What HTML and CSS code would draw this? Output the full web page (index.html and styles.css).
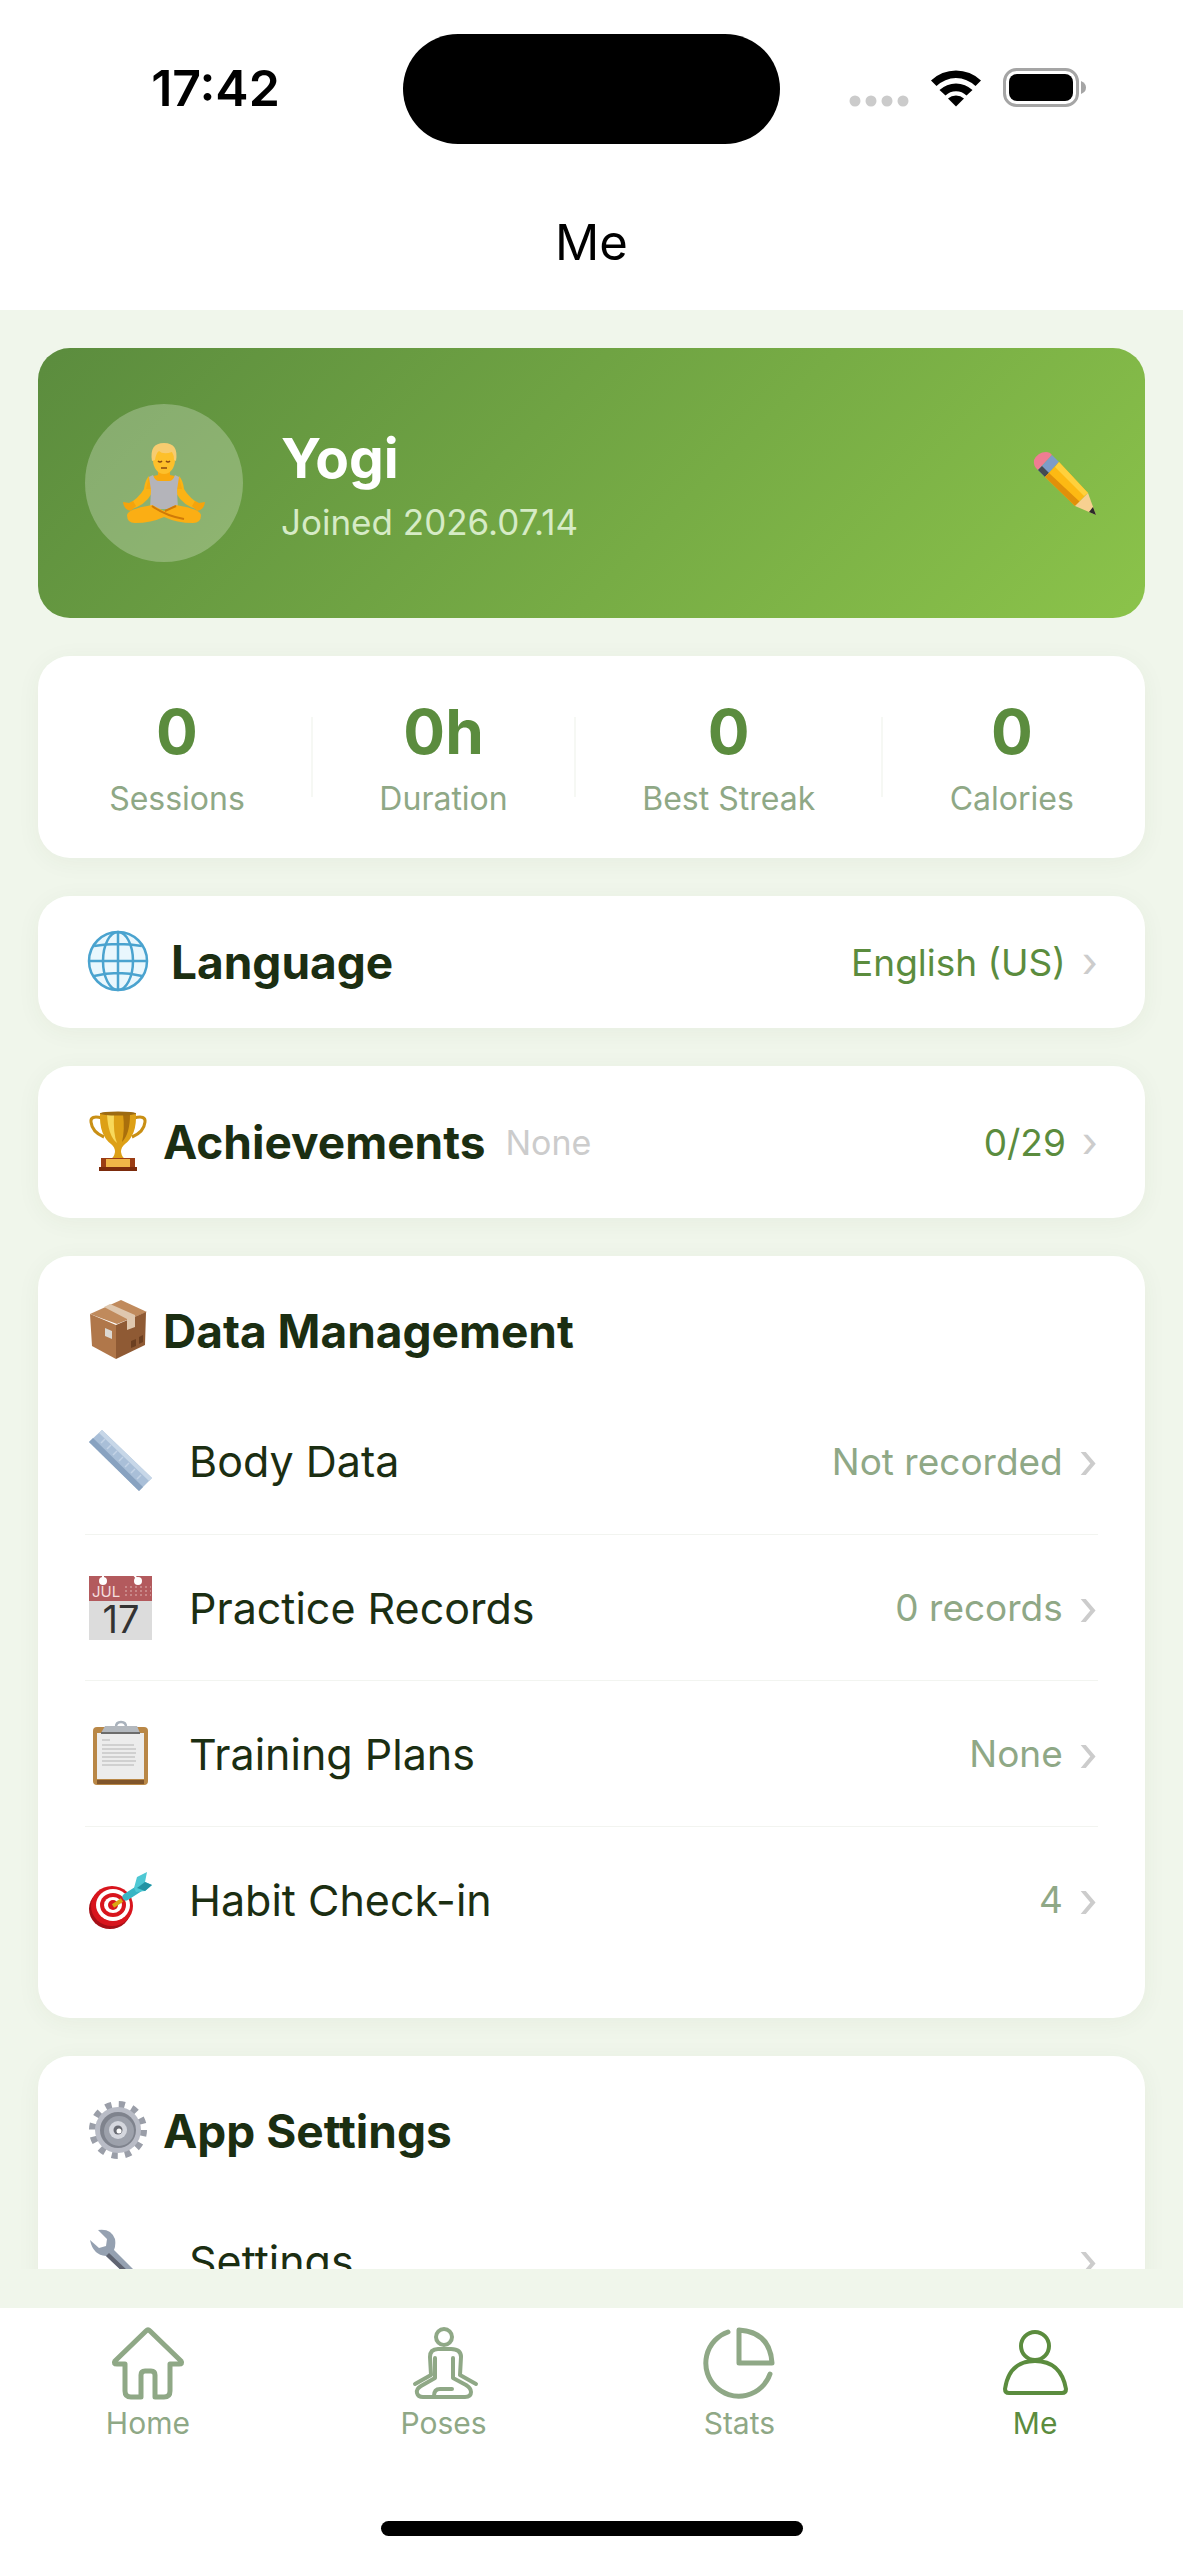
FILE: index.html
```html
<!DOCTYPE html>
<html lang="en">
  <head>
    <meta charset="UTF-8" />
    <meta name="viewport" content="width=device-width, initial-scale=1.0" />
    <title>Me</title>
    <link rel="stylesheet" href="styles.css" />
  </head>
  <body>
    <div class="status-bar">
      <div class="status-side">
        <span class="time">17:42</span>
      </div>
      <div class="island"></div>
      <div class="status-side status-icons">
        <svg class="signal" viewBox="0 0 60 40" fill="#cbcbcb">
          <circle cx="6" cy="33" r="5.500" />
          <circle cx="22" cy="33" r="5.500" />
          <circle cx="38" cy="33" r="5.500" />
          <circle cx="54" cy="33" r="5.500" />
        </svg>
        <svg class="wifi" viewBox="0 0 52 40">
          <path d="M1 12.500a36 36 0 0 1 50 0l-5.500 5.500a28 28 0 0 0-39 0z" />
          <path d="M9.500 22a24 24 0 0 1 33 0l-6 5.500a15 15 0 0 0-21 0z" />
          <path d="M18 30.500a12 12 0 0 1 16 0l-8 8z" />
        </svg>
        <svg class="battery" viewBox="0 0 84 40">
          <rect x="1.500" y="1.500" width="73" height="36" rx="12" fill="none" stroke="#a5a5a5" stroke-width="3" />
          <rect x="6" y="6" width="64" height="27" rx="8" />
          <path d="M78 13q5 2 5 6.500t-5 6.500z" fill="#a5a5a5" />
        </svg>
      </div>
    </div>

    <header class="nav-bar">
      <h1>Me</h1>
    </header>

    <main class="content">
      <section class="profile">
        <div class="avatar">
          <svg viewBox="0 0 84 80">
            <path d="M27 33q-4 4-5 13-5 9-17 16l2 5q16-4 23-17zM57 33q4 4 5 13 5 9 17 16l-2 5q-16-4-23-17z" fill="#fbb315" />
            <path d="M1 59l6 1 4-2 3 5-5 5q-7-1-8-9zM83 59l-6 1-4-2-3 5 5 5q7-1 8-9z" fill="#f5a30b" />
            <path d="M36 24h12v8l9 2 3 12H24l3-12 9-2z" fill="#f9a90e" />
            <path d="M31 32q2 6 6 6h10q4 0 6-6l4 2-2 13 1 19H28l1-19-2-13z" fill="#b4b4ba" />
            <path d="M30 62Q6 66 5 72q0 8 8 8 16 0 29-6 13 6 29 6 8 0 8-8-1-6-25-10l-12 6z" fill="#fbae14" />
            <path d="M30 63q14 10 32 13M54 63l-11 5" fill="none" stroke="#cf7a08" stroke-width="2" />
            <ellipse cx="42" cy="17" rx="11" ry="14" fill="#fdc02b" />
            <path d="M30 18Q27 0 42 0q15 0 12 18l-2-1q0-5-2-8-9 3-13-1-3 2-4 9z" fill="#f7cc70" />
            <path d="M36 18q2 2 4 0M44 18q2 2 4 0M39 25h6" fill="none" stroke="#8b4a12" stroke-width="1.500" />
          </svg>
        </div>
        <div class="profile-text">
          <h2>Yogi</h2>
          <p>Joined 2026.07.14</p>
        </div>
        <button class="edit" type="button" aria-label="Edit profile">
          <svg viewBox="0 0 66 66">
            <path d="M2 10Q6 2 14 2q4 0 6 3L6 20q-5-4-4-10z" fill="#ef7d92" />
            <path d="M6 20L20 5l7 7-14 15z" fill="#7d9cc9" />
            <path d="M6 20l4-4 7 7-4 4z" fill="#444a52" />
            <path d="M13 27L27 12l29 31-13 13z" fill="#fdb913" />
            <path d="M13 27l4-4 31 29-5 4z" fill="#e0900a" />
            <path d="M23 17l4-5 29 31-4 3z" fill="#ffd03c" />
            <path d="M43 56l13-13 8 22z" fill="#f7d090" />
            <path d="M57 62l4-5 3 8z" fill="#2b2b2b" />
          </svg>
        </button>
      </section>

      <section class="card stats">
        <div class="stat"><strong>0</strong><span>Sessions</span></div>
        <i class="divider"></i>
        <div class="stat"><strong>0h</strong><span>Duration</span></div>
        <i class="divider"></i>
        <div class="stat"><strong>0</strong><span>Best Streak</span></div>
        <i class="divider"></i>
        <div class="stat"><strong>0</strong><span>Calories</span></div>
      </section>

      <a class="card link-card language" href="#language">
        <svg class="icon" viewBox="0 0 66 66" fill="none" stroke="#4aa3cf" stroke-width="2.500">
          <circle cx="33" cy="32" r="29" fill="#e9f7fd" />
          <ellipse cx="33" cy="32" rx="15" ry="29" />
          <path d="M33 3v58M9 17q24-4 48 0M4 32h58M9 47q24-6 48 0" />
        </svg>
        <h2>Language</h2>
        <span class="link-value">English (US)</span>
        <span class="arrow">›</span>
      </a>

      <a class="card link-card" href="#achievements">
        <svg class="icon" viewBox="0 0 66 66">
          <path d="M17 9Q5 6 6 13q1 10 13 15M49 9q12-3 11 4-1 10-13 15" fill="none" stroke="#c98f14" stroke-width="3" />
          <path d="M15 4h36q1 22-11 31-4 3-4 8 1 6 5 7H25q4-1 5-7 0-5-4-8Q14 26 15 4z" fill="#dda016" />
          <path d="M22 5h7q-1 20 3 29-9-7-10-29z" fill="#f8d95b" />
          <path d="M38 5h7q0 20-8 28 3-12 1-28z" fill="#a96f0c" />
          <ellipse cx="33" cy="4.500" rx="18" ry="2" fill="#9d6b12" />
          <path d="M16 49h34v9H16z" fill="#9b3d14" />
          <path d="M14 58h38v4H14z" fill="#7c2b0c" />
          <path d="M21 50h24v8H21z" fill="#f0b548" />
        </svg>
        <h2>Achievements</h2>
        <span class="badge">None</span>
        <span class="link-value">0/29</span>
        <span class="arrow">›</span>
      </a>

      <section class="card group">
        <div class="group-title">
          <svg class="icon" viewBox="0 0 66 66">
            <path d="M5 16L36 2l26 12-30 12z" fill="#c08a5c" />
            <path d="M5 16l26 11v34L7 48z" fill="#b0774a" />
            <path d="M31 27l30-13-1 33-29 14z" fill="#8f5a34" />
            <path d="M19 9l6-3 25 11v12l-8 3V21z" fill="#dfc7ae" />
            <path d="M20 30l7 3v8l-7-3z" fill="#dcd8d2" />
            <path d="M46 43l5-2v7l-5 2zM54 39l4-2v7l-4 2z" fill="#6c3f20" />
          </svg>
          <h2>Data Management</h2>
        </div>
        <ul class="rows">
          <li>
            <a href="#body-data">
              <svg class="row-icon" viewBox="0 0 72 72">
                <path d="M4 17L17 5l50 48-13 13z" fill="#a9bfd8" />
                <path d="M4 17l4-4 50 49-4 4z" fill="#88a2c0" />
                <path d="M17 5l50 48-3 3L14 8z" fill="#c7d7e8" />
                <path d="M20 14l-4 4M26 20l-4 4M32 26l-4 4M38 32l-4 4M44 38l-4 4M50 44l-4 4M56 50l-4 4" stroke="#c3d3e6" stroke-width="1.500" />
              </svg>
              <span class="row-label">Body Data</span>
              <span class="row-value">Not recorded</span>
              <span class="row-arrow">›</span>
            </a>
          </li>
          <li>
            <a href="#records">
              <svg class="row-icon" viewBox="0 0 72 72">
                <path d="M4 4h63v64H4z" fill="#dcdcdc" />
                <path d="M4 4h63v25H4z" fill="#b35a5d" />
                <circle cx="18" cy="9" r="4" fill="#fff" />
                <circle cx="53" cy="9" r="4" fill="#fff" />
                <path d="M18 3v5M49 3l4 5" stroke="#fff" stroke-width="2" />
                <path d="M40 15h26M40 19h26M40 23h26" stroke="#cf9697" stroke-width="1.500" stroke-dasharray="2 3" />
                <text class="cal-month" x="7" y="25">JUL</text>
                <text class="cal-day" x="36" y="61">17</text>
              </svg>
              <span class="row-label">Practice Records</span>
              <span class="row-value">0 records</span>
              <span class="row-arrow">›</span>
            </a>
          </li>
          <li>
            <a href="#plans">
              <svg class="row-icon" viewBox="0 0 72 72">
                <rect x="8" y="9" width="55" height="58" rx="4" fill="#b98746" />
                <path d="M12 62h47v4H12z" fill="#80552b" />
                <path d="M12 15h47v46H12z" fill="#ececec" />
                <path d="M17 22h8M17 27h32M17 31h34M17 35h34M17 39h33M17 43h34M17 47h32" stroke="#d0d0d0" stroke-width="2" />
                <path d="M31 9q0-5 5-5t5 5" fill="none" stroke="#a9b2bc" stroke-width="2.500" />
                <path d="M20 8h32l3 7H16z" fill="#b3b8be" />
                <path d="M16 14h39v2H16z" fill="#6c6c6c" />
              </svg>
              <span class="row-label">Training Plans</span>
              <span class="row-value">None</span>
              <span class="row-arrow">›</span>
            </a>
          </li>
          <li>
            <a href="#habits">
              <svg class="row-icon" viewBox="0 0 72 72">
                <ellipse cx="25" cy="45" rx="21" ry="20" fill="#a60f16" />
                <ellipse cx="27" cy="42" rx="21" ry="20" fill="#d8151d" />
                <ellipse cx="28" cy="41" rx="17" ry="16" fill="#fff" />
                <ellipse cx="28" cy="41" rx="13" ry="12" fill="#d8151d" />
                <ellipse cx="28" cy="41" rx="9" ry="8" fill="#fff" />
                <ellipse cx="28" cy="41" rx="5" ry="5" fill="#d8151d" />
                <path d="M28 42l9-6" stroke="#d9a713" stroke-width="4" />
                <path d="M41 33l14-9" stroke="#39b5c4" stroke-width="7" stroke-linecap="round" />
                <path d="M49 24l3-11 10-5-2 10 7 3-7 6-9 1z" fill="#4ec8d4" />
                <path d="M52 24l8-6 7 3-7 6z" fill="#2393a3" />
              </svg>
              <span class="row-label">Habit Check-in</span>
              <span class="row-value">4</span>
              <span class="row-arrow">›</span>
            </a>
          </li>
        </ul>
      </section>

      <section class="card group">
        <div class="group-title">
          <svg class="icon" viewBox="0 0 66 66">
            <circle cx="33" cy="32" r="25" fill="none" stroke="#9a9ea8" stroke-width="8" stroke-dasharray="6 7.090" />
            <circle cx="33" cy="32" r="23" fill="#b9bcc6" />
            <circle cx="33" cy="32" r="18" fill="#7f838d" />
            <circle cx="34" cy="33" r="15" fill="#9da1ab" />
            <circle cx="33" cy="32" r="9" fill="#d5d7de" />
            <circle cx="33" cy="32" r="4.500" fill="#6a6c74" />
            <circle cx="34" cy="33" r="2.500" fill="#fff" />
          </svg>
          <h2>App Settings</h2>
        </div>
        <ul class="rows">
          <li>
            <a href="#settings">
              <svg class="row-icon" viewBox="0 0 72 72">
                <path d="M13 5q13-2 17 9 1 6-1 11l36 36-6 6-38-36Q8 30 5 15l9 8 7-2 1-7z" fill="#95a1b1" />
                <path d="M21 31l3-3 38 36-3 3z" fill="#5f6471" />
              </svg>
              <span class="row-label">Settings</span>
              <span class="row-value"></span>
              <span class="row-arrow">›</span>
            </a>
          </li>
        </ul>
      </section>
    </main>

    <nav class="tab-bar">
      <a class="tab" href="#home">
        <svg viewBox="0 0 76 76">
          <path d="M36 6q2-2 4 0l31 30q2 3-2 3h-9v27q0 6-6 6h-9V50q0-4-4-4h-6q-4 0-4 4v22H21q-6 0-6-6V39H7q-4 0-2-3z" />
        </svg>
        Home
      </a>
      <a class="tab" href="#poses">
        <svg class="thin" viewBox="0 0 76 76">
          <circle cx="38" cy="12" r="8" />
          <path d="M9 59l16-9-1-18q0-8 8-8h13q10 0 10 8l-1 18 16 9M29 33v20L15 61q-5 3-4 7 1 4 6 4h42q6 0 6-5 0-4-5-7L47 53V33M28 71q0-7 6-7h12" />
        </svg>
        Poses
      </a>
      <a class="tab" href="#stats">
        <svg viewBox="0 0 76 76">
          <path d="M38 5v33h33Q69 7 38 5zM27 7A33 33 0 1 0 69 49" />
        </svg>
        Stats
      </a>
      <a class="tab active" href="#me">
        <svg class="thin" viewBox="0 0 76 76">
          <circle cx="38" cy="21" r="14" />
          <path d="M8 64Q12 36 38 36t31 28q0 4-4 4H12q-4 0-4-4z" />
        </svg>
        Me
      </a>
    </nav>
    <div class="home-indicator"></div>
  </body>
</html>
```

FILE: styles.css
```css
* {
  box-sizing: border-box;
}
body {
  margin: 0;
  height: 100vh;
  display: flex;
  flex-direction: column;
  background: #fff;
  color: #1b2e12;
  font-family: Inter, "Liberation Sans", sans-serif;
}
h1,
h2,
p,
ul {
  margin: 0;
  padding: 0;
}
ul {
  list-style: none;
}
a {
  color: inherit;
  text-decoration: none;
}
svg {
  display: block;
  flex: none;
}

/* status bar */
.status-bar {
  display: flex;
  align-items: center;
  height: 178px;
  color: #000;
}
.status-side {
  flex: 1;
  display: flex;
  justify-content: center;
  padding-left: 28px;
  padding-bottom: 2px;
}
.island {
  width: 377px;
  height: 110px;
  border-radius: 55px;
  background: #000;
}
.time {
  font-size: 50px;
  font-weight: 600;
}
.status-icons {
  gap: 21px;
  padding-left: 0;
  padding-right: 28px;
}
.signal {
  width: 60px;
  height: 40px;
}
.wifi {
  width: 52px;
  height: 40px;
}
.battery {
  width: 84px;
  height: 40px;
}

.nav-bar {
  display: flex;
  align-items: center;
  justify-content: center;
  height: 132px;
  padding-bottom: 4px;
}
.nav-bar h1 {
  color: #000;
  font-size: 49px;
  font-weight: 400;
}

.content {
  flex: 1;
  min-height: 0;
  overflow: hidden;
  display: flex;
  flex-direction: column;
  gap: 38px;
  padding: 38px 38px 0;
  background: #f0f6eb;
  border-bottom: 39px solid #f0f6eb;
}
.content > * {
  flex: none;
}
.card {
  background: #fff;
  border-radius: 32px;
  box-shadow: 0 4px 24px rgba(60, 80, 30, 0.05);
}
h2 {
  font-size: 46px;
  font-weight: 700;
  line-height: 58px;
}

.profile {
  display: flex;
  align-items: center;
  gap: 38px;
  padding: 56px 47px;
  border-radius: 32px;
  background: linear-gradient(135deg, #5b8c3e, #8bc34a);
  color: #fff;
}
.avatar {
  display: flex;
  align-items: center;
  justify-content: center;
  width: 158px;
  height: 158px;
  border-radius: 50%;
  background: rgba(255, 255, 255, 0.25);
}
.avatar svg {
  width: 84px;
  height: 80px;
}
.profile-text {
  flex: 1;
}
.profile h2 {
  font-size: 55px;
  line-height: 72px;
}
.profile p {
  color: #d6ebc6;
  font-size: 35px;
  line-height: 44px;
  margin-top: 6px;
}
.edit {
  padding: 0;
  border: none;
  background: none;
  cursor: pointer;
}
.edit svg {
  width: 66px;
  height: 66px;
}

.stats {
  display: flex;
  align-items: center;
  justify-content: space-around;
  padding: 38px;
}
.stat {
  display: flex;
  flex-direction: column;
  align-items: center;
  gap: 8px;
}
.stat strong {
  color: #5b8c3e;
  font-size: 62px;
  font-weight: 700;
  line-height: 76px;
}
.stat span {
  color: #8fa886;
  font-size: 32px;
  line-height: 42px;
}
.divider {
  width: 2px;
  height: 80px;
  background: #f6f8f4;
}

.link-card {
  display: flex;
  align-items: center;
  padding: 47px;
}
.language {
  padding: 37px 47px;
}
.icon {
  width: 66px;
  height: 66px;
  margin: -4px 12px -4px 0;
}
.language .icon {
  margin-right: 20px;
}
.badge {
  margin-left: 20px;
  color: #ccc;
  font-size: 34px;
}
.link-value {
  margin-left: auto;
  color: #5b8c3e;
  font-size: 37px;
}
.arrow {
  margin-left: 16px;
  color: #ccc;
  font-size: 42px;
  line-height: 48px;
}

.group {
  padding: 46px 47px;
}
.group-title {
  display: flex;
  align-items: center;
  margin-bottom: 28px;
}
.rows li {
  display: flex;
  height: 146px;
}
.rows li + li {
  border-top: 1px solid #f2f4f0;
}
.rows a {
  flex: 1;
  display: flex;
  align-items: center;
}
.row-icon {
  width: 72px;
  height: 72px;
  margin-right: 32px;
}
.row-label {
  flex: 1;
  font-size: 43px;
}
.row-value {
  color: #8fa886;
  font-size: 37px;
}
.row-arrow {
  margin-left: 16px;
  color: #ccc;
  font-size: 50px;
  line-height: 56px;
}
.cal-month {
  fill: #f3dede;
  font-size: 15px;
}
.cal-day {
  fill: #333;
  font-size: 38px;
  text-anchor: middle;
}

/* bottom navigation */
.tab-bar {
  display: flex;
  padding-top: 17px;
}
.tab {
  flex: 1;
  display: flex;
  flex-direction: column;
  align-items: center;
  gap: 4px;
  color: #8fa886;
  font-size: 30px;
  line-height: 36px;
}
.tab svg {
  width: 76px;
  height: 76px;
  fill: none;
  stroke: currentColor;
  stroke-width: 5;
  stroke-linecap: round;
  stroke-linejoin: round;
}
.tab svg.thin {
  stroke-width: 4;
}
.tab.active {
  color: #5b8c3e;
}
.home-indicator {
  align-self: center;
  width: 422px;
  height: 15px;
  margin: 80px 0 24px;
  border-radius: 8px;
  background: #000;
}
```
